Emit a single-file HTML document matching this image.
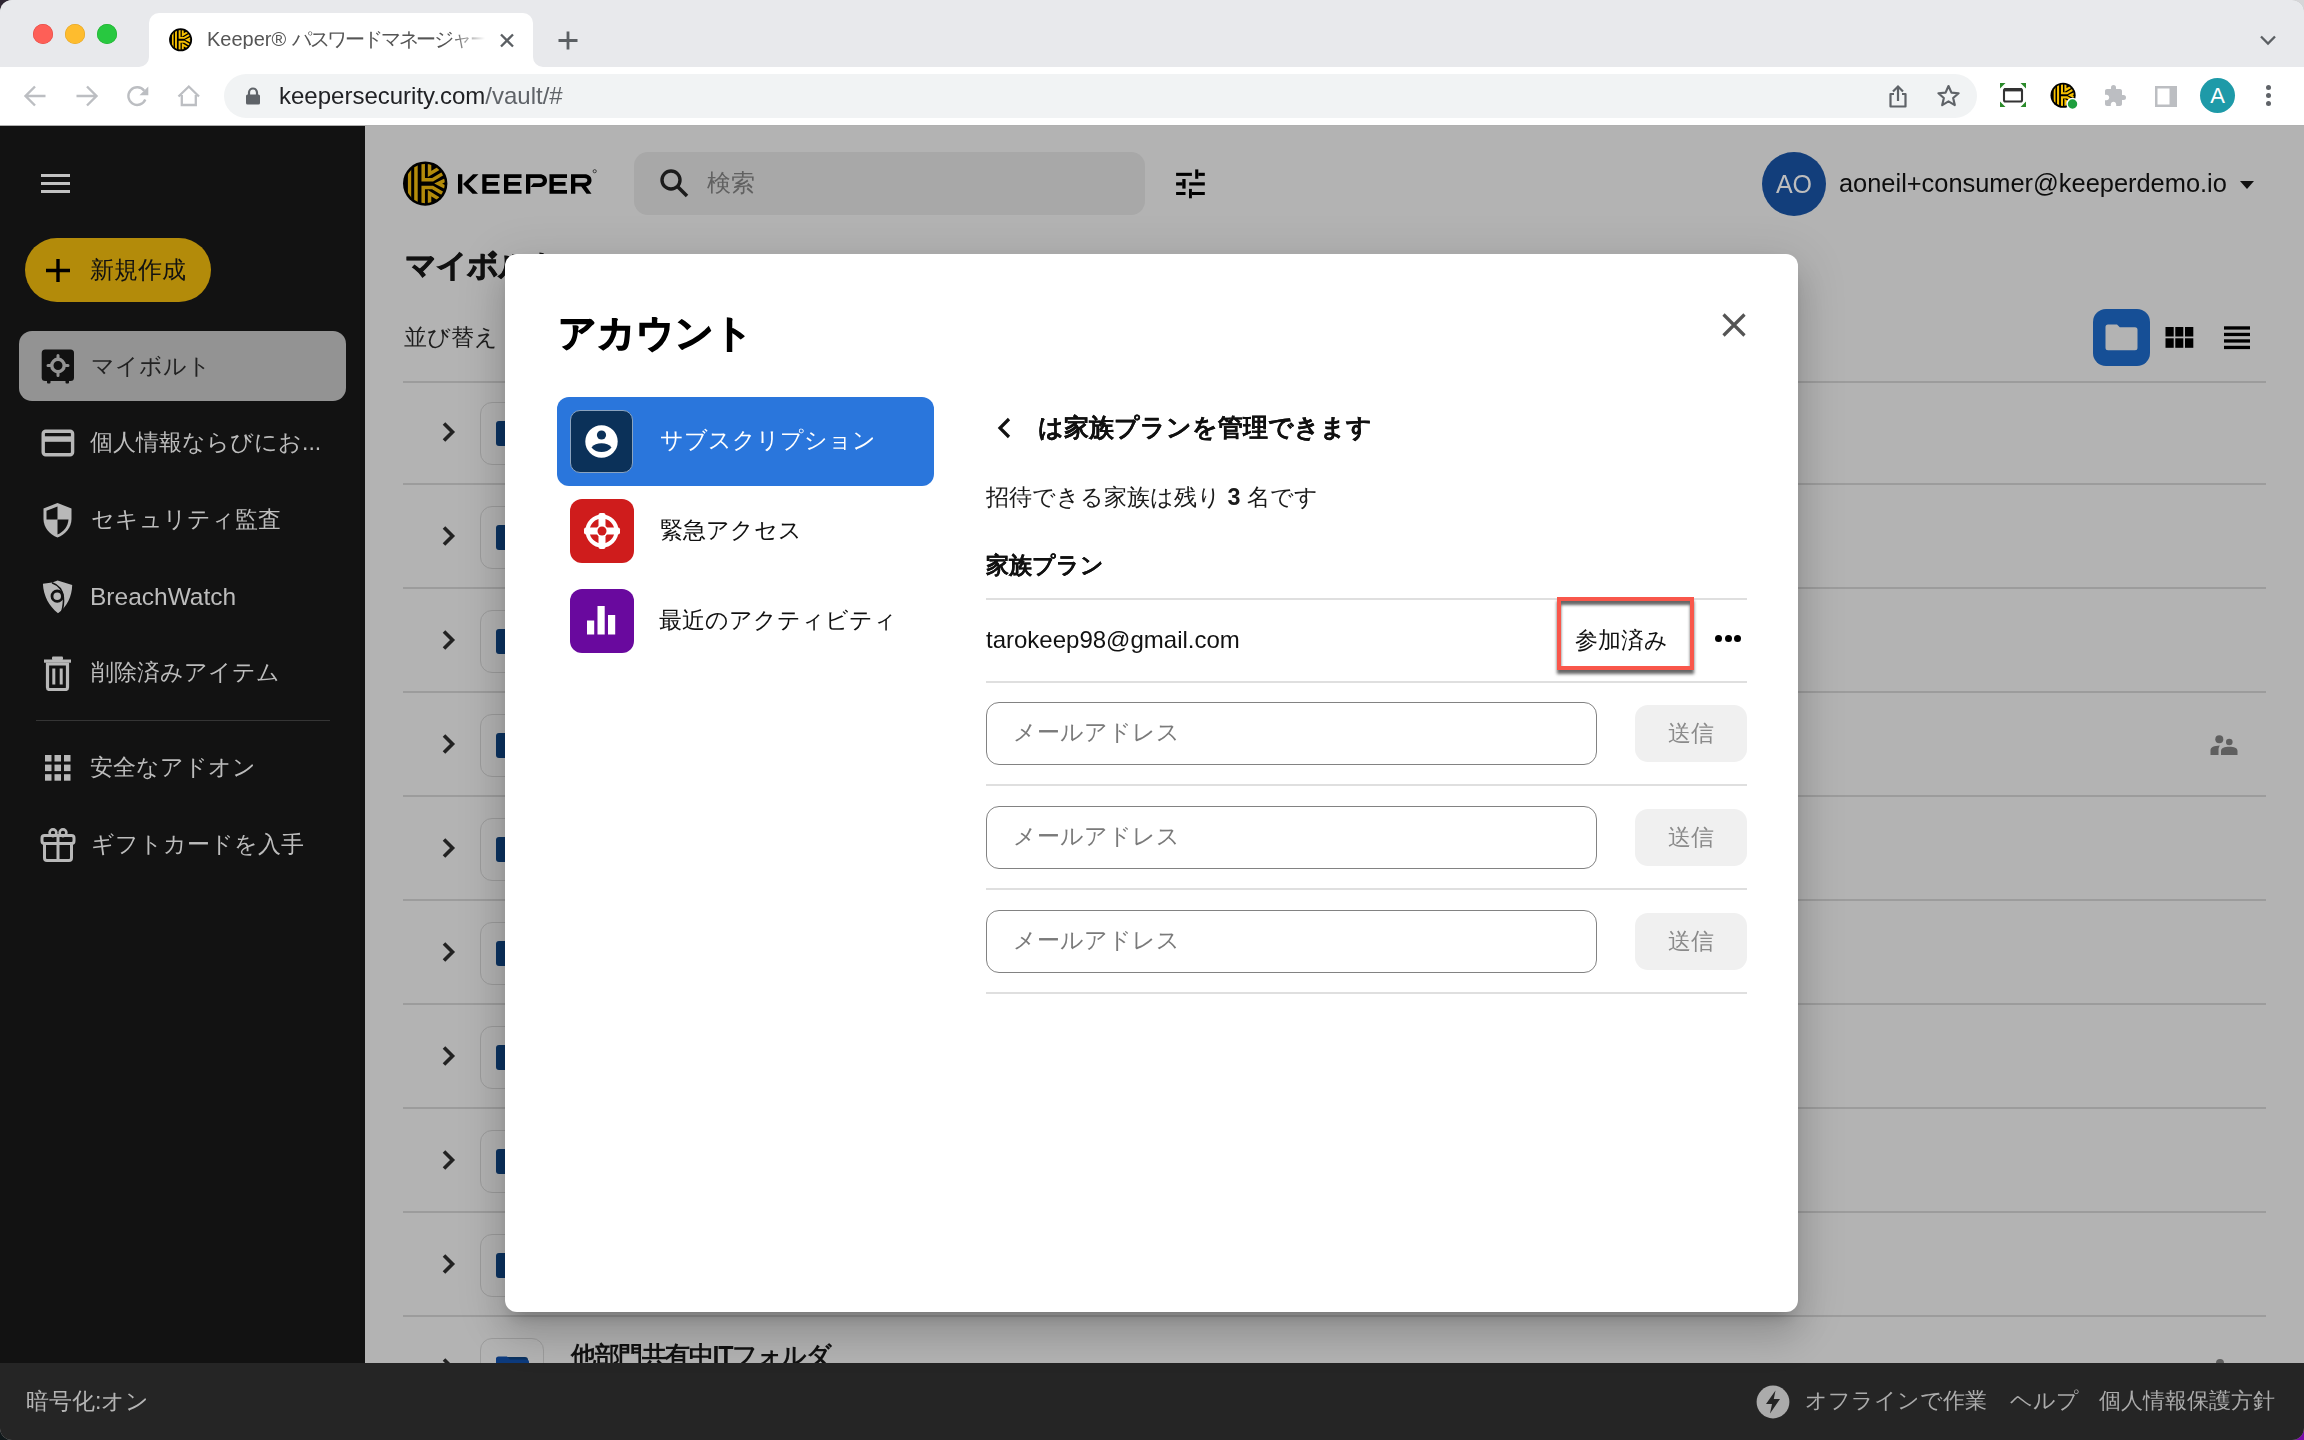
<!DOCTYPE html>
<html><head><meta charset="utf-8">
<style>
*{box-sizing:border-box;margin:0;padding:0}
html,body{width:2304px;height:1440px;overflow:hidden;background:#2a2530}
body{font-family:"Liberation Sans",sans-serif;position:relative}
.a{position:absolute}
#win{position:absolute;left:0;top:0;width:2304px;height:1440px;border-radius:12px;overflow:hidden;background:#b3b3b3;z-index:1}
#tabbar{left:0;top:0;width:2304px;height:67px;background:#e8e9ec}
#toolbar{left:0;top:67px;width:2304px;height:59px;background:#fff}
#sidebar{left:0;top:126px;width:365px;height:1237px;background:#121212}
#main{left:365px;top:126px;width:1939px;height:1237px;background:#b3b3b3}
#footer{left:0;top:1363px;width:2304px;height:77px;background:#252525}
#modal{left:505px;top:254px;width:1293px;height:1058px;background:#fff;border-radius:12px;box-shadow:0 11px 15px -7px rgba(0,0,0,.2),0 24px 38px 3px rgba(0,0,0,.12),0 9px 46px 8px rgba(0,0,0,.10)}
.t{white-space:nowrap;line-height:1;will-change:transform}
.bd{-webkit-text-stroke:0.9px currentColor}
.sb{font-size:23px;color:#bcbcbc;height:24px;line-height:24px}
</style></head>
<body>
<div class="a" style="left:0;top:0;width:20px;height:20px;background:#2f2633"></div>
<div class="a" style="left:2284px;top:0;width:20px;height:20px;background:#d6d6d8"></div>
<div class="a" style="left:0;top:1420px;width:20px;height:20px;background:#10181a"></div>
<div class="a" style="left:2284px;top:1420px;width:20px;height:20px;background:#7a0cab"></div>
<div id="win">

  <div id="tabbar" class="a"></div>
  <!-- traffic lights -->
  <div class="a" style="left:33px;top:24px;width:20px;height:20px;border-radius:50%;background:#fe5f57;box-shadow:inset 0 0 0 0.5px #e0443e"></div>
  <div class="a" style="left:65px;top:24px;width:20px;height:20px;border-radius:50%;background:#febc2e;box-shadow:inset 0 0 0 0.5px #dea123"></div>
  <div class="a" style="left:97px;top:24px;width:20px;height:20px;border-radius:50%;background:#28c840;box-shadow:inset 0 0 0 0.5px #1aab29"></div>
  <!-- tab -->
  <div class="a" style="left:149px;top:13px;width:384px;height:60px;background:#fff;border-radius:10px 10px 0 0"></div>
  <svg class="a" style="left:139px;top:57px" width="10" height="10"><path d="M0 10 A10 10 0 0 0 10 0 L10 10 Z" fill="#fff"/></svg>
  <svg class="a" style="left:533px;top:57px" width="10" height="10"><path d="M10 10 A10 10 0 0 1 0 0 L0 10 Z" fill="#fff"/></svg>
  <svg class="a" style="left:169px;top:28px" width="24" height="24" viewBox="0 0 48 48">
    <defs><clipPath id="fc"><circle cx="23.2" cy="23.6" r="19.6"/></clipPath></defs>
    <circle cx="23.2" cy="23.6" r="23" fill="#000"/>
    <g clip-path="url(#fc)" fill="none" stroke="#f7c000" stroke-width="3.8" stroke-linejoin="miter">
      <path d="M7.55 0V48" stroke-width="3.3"/><path d="M13.95 0V48"/>
      <path d="M21.2 0V19.75H30.6L46 10.5"/>
      <path d="M21.2 48V27.45H30.6L46 36.7"/>
      <path d="M27.55 0V14L37 8.3"/>
      <path d="M27.55 48V33.2L37 38.9"/>
      <path d="M46 18.8L36.2 23.6L46 28.4"/>
    </g>
  </svg>
  <div class="a t" style="left:207px;top:29px;font-size:20px;color:#555;width:278px;overflow:hidden;-webkit-mask-image:linear-gradient(90deg,#000 88%,transparent)">Keeper® <span style="letter-spacing:-2.2px">パスワードマネージャー</span></div>
  <svg class="a" style="left:499px;top:33px" width="16" height="15" viewBox="0 0 16 15"><path d="M2 1.5L14 13.5M14 1.5L2 13.5" stroke="#5b5f63" stroke-width="2.3"/></svg>
  <svg class="a" style="left:557px;top:30px" width="22" height="21" viewBox="0 0 22 21"><path d="M11 1.5V19.5M1.5 10.5H20.5" stroke="#5b5f63" stroke-width="2.8"/></svg>
  <svg class="a" style="left:2258px;top:32px" width="20" height="16" viewBox="0 0 20 16"><path d="M3 4.5L10 11.5L17 4.5" stroke="#5b5f63" stroke-width="2.3" fill="none"/></svg>
  <div id="toolbar" class="a"></div>
  <!-- nav icons -->
  <svg class="a" style="left:22px;top:83px" width="26" height="26" viewBox="0 0 26 26"><path d="M23.5 13H4.5M13 3.5L3.5 13L13 22.5" stroke="#bcbec2" stroke-width="2.4" fill="none"/></svg>
  <svg class="a" style="left:74px;top:83px" width="26" height="26" viewBox="0 0 26 26"><path d="M2.5 13H21.5M13 3.5L22.5 13L13 22.5" stroke="#bcbec2" stroke-width="2.4" fill="none"/></svg>
  <svg class="a" style="left:125px;top:84px" width="26" height="26" viewBox="0 0 26 26"><path d="M20.3 15.5A8.8 8.8 0 1 1 19.2 6.8" stroke="#bcbec2" stroke-width="2.4" fill="none"/><path d="M23.3 2.5V11.3H14.5Z" fill="#bcbec2"/></svg>
  <svg class="a" style="left:176px;top:84px" width="26" height="26" viewBox="0 0 26 26"><path d="M5.8 11V21H19.8V11M2.5 12.5L12.8 2.5L23 12.5" stroke="#bcbec2" stroke-width="2.3" fill="none" stroke-linejoin="miter"/></svg>
  <!-- url bar -->
  <div class="a" style="left:224px;top:74px;width:1753px;height:44px;border-radius:22px;background:#f1f3f4"></div>
  <svg class="a" style="left:244px;top:86px" width="18" height="20" viewBox="0 0 18 20"><path d="M5 9V6.5a4 4 0 0 1 8 0V9" stroke="#5f6368" stroke-width="2.2" fill="none"/><rect x="2" y="8.5" width="14" height="10" rx="1.5" fill="#5f6368"/></svg>
  <div class="a t" style="left:279px;top:84px;font-size:24px;color:#202124">keepersecurity.com<span style="color:#5f6368">/vault/#</span></div>
  <!-- right toolbar icons -->
  <svg class="a" style="left:1886px;top:84px" width="24" height="25" viewBox="0 0 24 25"><path d="M12 17V3M7 7.5L12 2.5L17 7.5" stroke="#5f6368" stroke-width="2.2" fill="none"/><path d="M8 10H4.5V22.5H19.5V10H16" stroke="#5f6368" stroke-width="2.2" fill="none" stroke-linejoin="round"/></svg>
  <svg class="a" style="left:1935px;top:83px" width="27" height="26" viewBox="0 0 24 24"><path d="M12 2.8l2.7 6.1 6.6.6-5 4.4 1.5 6.5L12 17l-5.8 3.4 1.5-6.5-5-4.4 6.6-.6z" stroke="#5f6368" stroke-width="2" fill="none" stroke-linejoin="round"/></svg>
  <svg class="a" style="left:1999px;top:82px" width="28" height="26" viewBox="0 0 28 26"><path d="M1 1H6.5L1 6.5Z M27 1H21.5L27 6.5Z M1 25H6.5L1 19.5Z M27 25H21.5L27 19.5Z" fill="#2a8a2a"/><rect x="5" y="7" width="18" height="12.5" rx="1.5" stroke="#333" stroke-width="2.1" fill="none"/><path d="M5 7.8H23" stroke="#333" stroke-width="3.2"/></svg>
  <svg class="a" style="left:2050px;top:82px" width="30" height="28" viewBox="0 0 30 28">
    <g transform="translate(0.5,0.5) scale(0.5417)">
    <defs><clipPath id="ec"><circle cx="23.2" cy="23.6" r="19.8"/></clipPath></defs>
    <circle cx="23.2" cy="23.6" r="23.2" fill="#000"/>
    <g clip-path="url(#ec)" fill="none" stroke="#f7c000" stroke-width="3.8" stroke-linejoin="miter">
      <path d="M7.55 0V48" stroke-width="3.3"/><path d="M13.95 0V48"/>
      <path d="M21.2 0V19.75H30.6L46 10.5"/>
      <path d="M21.2 48V27.45H30.6L46 36.7"/>
      <path d="M27.55 0V14L37 8.3"/>
      <path d="M27.55 48V33.2L37 38.9"/>
      <path d="M46 18.8L36.2 23.6L46 28.4"/>
    </g></g>
    <circle cx="22.5" cy="22" r="5.5" fill="#1e9e3e" stroke="#fff" stroke-width="1.5"/>
  </svg>
  <svg class="a" style="left:2102px;top:84px" width="26" height="24" viewBox="0 0 24 24"><path d="M20.5 11H19V7c0-1.1-.9-2-2-2h-4V3.5a2.5 2.5 0 0 0-5 0V5H4c-1.1 0-2 .9-2 2v3.8h1.5c1.5 0 2.7 1.2 2.7 2.7S5 16.2 3.5 16.2H2V20c0 1.1.9 2 2 2h3.8v-1.5c0-1.5 1.2-2.7 2.7-2.7s2.7 1.2 2.7 2.7V22H17c1.1 0 2-.9 2-2v-4h1.5a2.5 2.5 0 0 0 0-5z" fill="#bcbec2"/></svg>
  <svg class="a" style="left:2154px;top:85px" width="24" height="23" viewBox="0 0 24 23"><rect x="1" y="1" width="22" height="21" fill="#bcbec2"/><rect x="3.5" y="3.5" width="12" height="16" fill="#fff"/></svg>
  <div class="a" style="left:2200px;top:78px;width:35px;height:35px;border-radius:50%;background:#1e9aa8;color:#fff;font-size:22px;text-align:center;line-height:35px">A</div>
  <div class="a" style="left:2266px;top:85px;width:5px;height:5px;border-radius:50%;background:#5f6368"></div>
  <div class="a" style="left:2266px;top:93px;width:5px;height:5px;border-radius:50%;background:#5f6368"></div>
  <div class="a" style="left:2266px;top:101px;width:5px;height:5px;border-radius:50%;background:#5f6368"></div>
  <div class="a" style="left:0;top:125px;width:2304px;height:1px;background:#b0b0b0"></div>

  <div id="sidebar" class="a"></div>
  <!-- hamburger -->
  <div class="a" style="left:41px;top:174px;width:29px;height:3px;background:#c2c2c2"></div>
  <div class="a" style="left:41px;top:182px;width:29px;height:3px;background:#c2c2c2"></div>
  <div class="a" style="left:41px;top:190px;width:29px;height:3px;background:#c2c2c2"></div>
  <!-- new button -->
  <div class="a" style="left:25px;top:238px;width:186px;height:64px;border-radius:32px;background:#b38b0a"></div>
  <svg class="a" style="left:46px;top:259px" width="24" height="23" viewBox="0 0 24 23"><path d="M12 0V23M0 11.5H24" stroke="#000" stroke-width="3.4"/></svg>
  <div class="a t" style="left:90px;top:258px;font-size:24px;color:#111;height:24px;line-height:24px">新規作成</div>
  <!-- active item -->
  <div class="a" style="left:19px;top:331px;width:327px;height:70px;border-radius:13px;background:#939393"></div>
  <svg class="a" style="left:41px;top:349px" width="34" height="36" viewBox="0 0 34 36">
    <rect x="0.7" y="0.5" width="32.3" height="31.5" rx="3.5" fill="#111"/>
    <rect x="6" y="31" width="3.5" height="3.5" rx="1" fill="#111"/>
    <rect x="24.5" y="31" width="3.5" height="3.5" rx="1" fill="#111"/>
    <circle cx="17" cy="16.5" r="6.2" stroke="#939393" stroke-width="3.4" fill="none"/>
    <path d="M17 6.5v3M17 23.5v3M7 16.5h3M24 16.5h3" stroke="#939393" stroke-width="3" stroke-linecap="round"/>
  </svg>
  <div class="a t sb" style="left:91px;top:354px;color:#222">マイボルト</div>
  <!-- card -->
  <svg class="a" style="left:41px;top:429px" width="34" height="28" viewBox="0 0 34 28"><rect x="2.2" y="2.2" width="29.4" height="23.6" rx="2.5" stroke="#b8b8b8" stroke-width="3.4" fill="none"/><rect x="2" y="7.3" width="30" height="5.5" fill="#b8b8b8"/></svg>
  <div class="a t sb" style="left:90px;top:430px">個人情報ならびにお...</div>
  <!-- shield -->
  <svg class="a" style="left:42px;top:502px" width="31" height="36" viewBox="0 0 31 36">
    <path d="M15.5 1L29.5 6.5V17c0 8.5-6 15.5-14 18.5C7.5 32.5 1.5 25.5 1.5 17V6.5Z" fill="#b8b8b8"/>
    <path d="M15.5 4.5L4.5 8.8V17.5H15.5Z" fill="#121212"/>
    <path d="M15.5 17.5H26.5C26 24.5 21.5 30 15.5 32.5Z" fill="#121212"/>
  </svg>
  <div class="a t sb" style="left:91px;top:507px">セキュリティ監査</div>
  <!-- breachwatch -->
  <svg class="a" style="left:42px;top:580px" width="31" height="34" viewBox="0 0 31 34">
    <path d="M0.9 3.7L10.3 2.5L15.6 0.5L30.2 4.9C30 16 25 27 16 33.2C7 26 1.5 16 0.9 3.7Z" fill="#b8b8b8"/>
    <path d="M10 2.8C16 5 20.5 10 21.3 17C22 23 21 28 19.5 33" stroke="#121212" stroke-width="1.6" fill="none"/>
    <circle cx="15.2" cy="16.2" r="5.2" stroke="#121212" stroke-width="2.8" fill="none"/>
  </svg>
  <div class="a t sb" style="left:90px;top:585px;font-size:24.5px">BreachWatch</div>
  <!-- trash -->
  <svg class="a" style="left:44px;top:656px" width="27" height="35" viewBox="0 0 27 35">
    <rect x="0" y="3.5" width="27" height="3.2" fill="#b8b8b8"/>
    <rect x="8" y="0.5" width="11" height="3.5" rx="1" fill="#b8b8b8"/>
    <path d="M3.5 8.5V32c0 1.2.8 2 2 2h16c1.2 0 2-.8 2-2V8.5Z" stroke="#b8b8b8" stroke-width="3.2" fill="none" transform="translate(0,-0.5)"/>
    <rect x="8.3" y="12.5" width="3" height="16" fill="#b8b8b8"/>
    <rect x="15.7" y="12.5" width="3" height="16" fill="#b8b8b8"/>
  </svg>
  <div class="a t sb" style="left:91px;top:660px">削除済みアイテム</div>
  <div class="a" style="left:36px;top:720px;width:294px;height:1px;background:#353535"></div>
  <!-- grid -->
  <svg class="a" style="left:44px;top:754px" width="27" height="28" viewBox="0 0 27 28" fill="#b8b8b8">
    <rect x="1" y="1" width="6.5" height="6.5"/><rect x="10.5" y="1" width="6.5" height="6.5"/><rect x="20" y="1" width="6.5" height="6.5"/>
    <rect x="1" y="10.6" width="6.5" height="6.5"/><rect x="10.5" y="10.6" width="6.5" height="6.5"/><rect x="20" y="10.6" width="6.5" height="6.5"/>
    <rect x="1" y="20.2" width="6.5" height="6.5"/><rect x="10.5" y="20.2" width="6.5" height="6.5"/><rect x="20" y="20.2" width="6.5" height="6.5"/>
  </svg>
  <div class="a t sb" style="left:90px;top:755px">安全なアドオン</div>
  <!-- gift -->
  <svg class="a" style="left:40px;top:828px" width="36" height="34" viewBox="0 0 36 34">
    <rect x="2" y="7.5" width="32" height="8" rx="2.5" stroke="#b8b8b8" stroke-width="3" fill="none"/>
    <path d="M4.5 15.5V30c0 1.5 1 2.5 2.5 2.5h22c1.5 0 2.5-1 2.5-2.5V15.5" stroke="#b8b8b8" stroke-width="3" fill="none"/>
    <path d="M18 7.5V32.5" stroke="#b8b8b8" stroke-width="3"/>
    <circle cx="13" cy="4.8" r="3.4" stroke="#b8b8b8" stroke-width="2.6" fill="none"/>
    <circle cx="23" cy="4.8" r="3.4" stroke="#b8b8b8" stroke-width="2.6" fill="none"/>
  </svg>
  <div class="a t sb" style="left:91px;top:832px">ギフトカードを入手</div>

  <div id="main" class="a"></div>
  <!-- logo -->
  <svg class="a" style="left:402px;top:160px" width="48" height="48" viewBox="0 0 48 48">
    <defs><clipPath id="lc"><circle cx="23.2" cy="23.6" r="19.6"/></clipPath></defs>
    <circle cx="23.2" cy="23.6" r="22.2" fill="#000"/>
    <g clip-path="url(#lc)" fill="none" stroke="#b38b0a" stroke-width="3.5" stroke-linejoin="miter">
      <path d="M7.55 0V48" stroke-width="3.3"/><path d="M13.95 0V48"/>
      <path d="M21.2 0V19.75H30.6L46 10.5"/>
      <path d="M21.2 48V27.45H30.6L46 36.7"/>
      <path d="M27.55 0V14L37 8.3"/>
      <path d="M27.55 48V33.2L37 38.9"/>
      <path d="M46 18.8L36.2 23.6L46 28.4"/>
    </g>
  </svg>
  <svg class="a" style="left:456px;top:166px" width="142" height="30" viewBox="0 0 142 30" fill="#000">
    <path d="M2 8.2H6.3V27.7H2Z"/><path d="M17 8.2H22.5L12.5 17.9L22 27.7H16.5L7 17.9Z"/>
    <path d="M26.3 8.2H43.5V12H30.5V16H42V19.8H30.5V23.9H43.5V27.7H26.3Z"/>
    <path d="M48 8.2H65.5V12H52.3V16H64V19.8H52.3V23.9H65.5V27.7H48Z"/>
    <path d="M70 27.7V8.2H83.5C88 8.2 91 10.5 91 14.5C91 18.5 88 21 83.5 21H74.5L77.5 17.2H83.3C85.5 17.2 86.8 16.2 86.8 14.5C86.8 12.8 85.5 12 83.3 12H74.3V27.7Z"/>
    <path d="M93.5 8.2H111V12H97.8V16H109.5V19.8H97.8V23.9H111V27.7H93.5Z"/>
    <path d="M115 27.7V8.2H128.5C133 8.2 135.5 10.5 135.5 14.3C135.5 17.5 133.5 19.8 130 20.3L135.5 27.7H130.5L125.2 20.5H119.3V16.7H128.3C130.3 16.7 131.3 15.8 131.3 14.3C131.3 12.8 130.3 12 128.3 12H119.3V27.7Z"/>
    <circle cx="138.7" cy="5.2" r="1.6" fill="none" stroke="#000" stroke-width="0.6"/>
  </svg>
  <!-- search -->
  <div class="a" style="left:634px;top:152px;width:511px;height:63px;border-radius:14px;background:#a8a8a8"></div>
  <svg class="a" style="left:658px;top:167px" width="32" height="32" viewBox="0 0 32 32"><circle cx="13" cy="13" r="9" stroke="#1c1c1c" stroke-width="3.4" fill="none"/><path d="M19.5 19.5L29 29" stroke="#1c1c1c" stroke-width="3.6"/></svg>
  <div class="a t" style="left:707px;top:171px;font-size:24px;color:#616161;line-height:24px">検索</div>
  <!-- filter icon -->
  <svg class="a" style="left:1174px;top:168px" width="32" height="32" viewBox="0 0 32 32" fill="#000">
    <rect x="2.1" y="4.8" width="15.8" height="3.1"/><rect x="21.2" y="1.4" width="3.1" height="9.4"/><rect x="24.3" y="4.8" width="6.5" height="3.1"/>
    <rect x="2.1" y="14.3" width="6.4" height="3.2"/><rect x="8.3" y="11" width="3.3" height="9.6"/><rect x="15.2" y="14.3" width="15.6" height="3.2"/>
    <rect x="2.1" y="24" width="9.4" height="3"/><rect x="15" y="20.9" width="2.9" height="9.4"/><rect x="17.9" y="24" width="12.9" height="3"/>
  </svg>
  <!-- avatar + email -->
  <div class="a" style="left:1762px;top:152px;width:64px;height:64px;border-radius:50%;background:#123e7b"></div>
  <div class="a t" style="left:1762px;top:172px;width:64px;text-align:center;font-size:25px;color:#bdbdbd;line-height:25px">AO</div>
  <div class="a t" style="left:1839px;top:170px;font-size:25.4px;color:#0d0d0d;line-height:26px">aoneil+consumer@keeperdemo.io</div>
  <svg class="a" style="left:2239px;top:180px" width="16" height="10" viewBox="0 0 16 10"><path d="M1 1H15L8 9Z" fill="#111"/></svg>
  <!-- title + sort -->
  <div class="a t bd" style="left:405px;top:250px;font-size:31px;font-weight:bold;color:#111;line-height:32px;letter-spacing:-1px">マイボルト</div>
  <div class="a t" style="left:404px;top:325px;font-size:23px;color:#1e1e1e;line-height:24px">並び替え</div>
  <!-- view toggles -->
  <div class="a" style="left:2093px;top:309px;width:57px;height:57px;border-radius:13px;background:#164f96"></div>
  <svg class="a" style="left:2105px;top:324px" width="33" height="27" viewBox="0 0 33 27"><path d="M0.5 3A2.5 2.5 0 0 1 3 0.5H12L14.8 3.3H30A2.5 2.5 0 0 1 32.5 5.8V23.8A2.5 2.5 0 0 1 30 26.3H3A2.5 2.5 0 0 1 0.5 23.8Z" fill="#b3b3b3"/></svg>
  <svg class="a" style="left:2165px;top:326px" width="29" height="23" viewBox="0 0 29 23" fill="#000">
    <rect x="0.5" y="1" width="8.2" height="9.5"/><rect x="10.3" y="1" width="8" height="9.5"/><rect x="20" y="1" width="8.3" height="9.5"/>
    <rect x="0.5" y="12.3" width="8.2" height="9.5"/><rect x="10.3" y="12.3" width="8" height="9.5"/><rect x="20" y="12.3" width="8.3" height="9.5"/>
  </svg>
  <svg class="a" style="left:2223px;top:325px" width="28" height="25" viewBox="0 0 28 25" fill="#000">
    <rect x="1" y="1.3" width="26" height="3.3"/><rect x="1" y="7.8" width="26" height="3.3"/><rect x="1" y="14.3" width="26" height="3.3"/><rect x="1" y="20.8" width="26" height="3.3"/>
  </svg>
  <div class="a" style="left:403px;top:381px;width:1863px;height:2px;background:#9c9c9c"></div>
  <svg class="a" style="left:440px;top:421px" width="17" height="22" viewBox="0 0 17 22"><path d="M4 2.5L12.5 11L4 19.5" stroke="#222" stroke-width="3.6" fill="none"/></svg>
  <div class="a" style="left:480px;top:402px;width:64px;height:63px;border:1.5px solid #9c9c9c;border-radius:12px"></div>
  <div class="a" style="left:496px;top:421px;width:32px;height:25px;border-radius:3px;background:#0b3260"></div>
  <svg class="a" style="left:440px;top:525px" width="17" height="22" viewBox="0 0 17 22"><path d="M4 2.5L12.5 11L4 19.5" stroke="#222" stroke-width="3.6" fill="none"/></svg>
  <div class="a" style="left:480px;top:506px;width:64px;height:63px;border:1.5px solid #9c9c9c;border-radius:12px"></div>
  <div class="a" style="left:496px;top:525px;width:32px;height:25px;border-radius:3px;background:#0b3260"></div>
  <svg class="a" style="left:440px;top:629px" width="17" height="22" viewBox="0 0 17 22"><path d="M4 2.5L12.5 11L4 19.5" stroke="#222" stroke-width="3.6" fill="none"/></svg>
  <div class="a" style="left:480px;top:610px;width:64px;height:63px;border:1.5px solid #9c9c9c;border-radius:12px"></div>
  <div class="a" style="left:496px;top:629px;width:32px;height:25px;border-radius:3px;background:#0b3260"></div>
  <svg class="a" style="left:440px;top:733px" width="17" height="22" viewBox="0 0 17 22"><path d="M4 2.5L12.5 11L4 19.5" stroke="#222" stroke-width="3.6" fill="none"/></svg>
  <div class="a" style="left:480px;top:714px;width:64px;height:63px;border:1.5px solid #9c9c9c;border-radius:12px"></div>
  <div class="a" style="left:496px;top:733px;width:32px;height:25px;border-radius:3px;background:#0b3260"></div>
  <svg class="a" style="left:440px;top:837px" width="17" height="22" viewBox="0 0 17 22"><path d="M4 2.5L12.5 11L4 19.5" stroke="#222" stroke-width="3.6" fill="none"/></svg>
  <div class="a" style="left:480px;top:818px;width:64px;height:63px;border:1.5px solid #9c9c9c;border-radius:12px"></div>
  <div class="a" style="left:496px;top:837px;width:32px;height:25px;border-radius:3px;background:#0b3260"></div>
  <svg class="a" style="left:440px;top:941px" width="17" height="22" viewBox="0 0 17 22"><path d="M4 2.5L12.5 11L4 19.5" stroke="#222" stroke-width="3.6" fill="none"/></svg>
  <div class="a" style="left:480px;top:922px;width:64px;height:63px;border:1.5px solid #9c9c9c;border-radius:12px"></div>
  <div class="a" style="left:496px;top:941px;width:32px;height:25px;border-radius:3px;background:#0b3260"></div>
  <svg class="a" style="left:440px;top:1045px" width="17" height="22" viewBox="0 0 17 22"><path d="M4 2.5L12.5 11L4 19.5" stroke="#222" stroke-width="3.6" fill="none"/></svg>
  <div class="a" style="left:480px;top:1026px;width:64px;height:63px;border:1.5px solid #9c9c9c;border-radius:12px"></div>
  <div class="a" style="left:496px;top:1045px;width:32px;height:25px;border-radius:3px;background:#0b3260"></div>
  <svg class="a" style="left:440px;top:1149px" width="17" height="22" viewBox="0 0 17 22"><path d="M4 2.5L12.5 11L4 19.5" stroke="#222" stroke-width="3.6" fill="none"/></svg>
  <div class="a" style="left:480px;top:1130px;width:64px;height:63px;border:1.5px solid #9c9c9c;border-radius:12px"></div>
  <div class="a" style="left:496px;top:1149px;width:32px;height:25px;border-radius:3px;background:#0b3260"></div>
  <svg class="a" style="left:440px;top:1253px" width="17" height="22" viewBox="0 0 17 22"><path d="M4 2.5L12.5 11L4 19.5" stroke="#222" stroke-width="3.6" fill="none"/></svg>
  <div class="a" style="left:480px;top:1234px;width:64px;height:63px;border:1.5px solid #9c9c9c;border-radius:12px"></div>
  <div class="a" style="left:496px;top:1253px;width:32px;height:25px;border-radius:3px;background:#0b3260"></div>
  <svg class="a" style="left:440px;top:1357px" width="17" height="22" viewBox="0 0 17 22"><path d="M4 2.5L12.5 11L4 19.5" stroke="#222" stroke-width="3.6" fill="none"/></svg>
  <div class="a" style="left:480px;top:1338px;width:64px;height:63px;border:1.5px solid #9c9c9c;border-radius:12px"></div>
  <div class="a" style="left:496px;top:1357px;width:32px;height:25px;border-radius:3px;background:#0b3260"></div>
  <div class="a" style="left:403px;top:483px;width:1863px;height:2px;background:#9c9c9c"></div>
  <div class="a" style="left:403px;top:587px;width:1863px;height:2px;background:#9c9c9c"></div>
  <div class="a" style="left:403px;top:691px;width:1863px;height:2px;background:#9c9c9c"></div>
  <div class="a" style="left:403px;top:795px;width:1863px;height:2px;background:#9c9c9c"></div>
  <div class="a" style="left:403px;top:899px;width:1863px;height:2px;background:#9c9c9c"></div>
  <div class="a" style="left:403px;top:1003px;width:1863px;height:2px;background:#9c9c9c"></div>
  <div class="a" style="left:403px;top:1107px;width:1863px;height:2px;background:#9c9c9c"></div>
  <div class="a" style="left:403px;top:1211px;width:1863px;height:2px;background:#9c9c9c"></div>
  <div class="a" style="left:403px;top:1315px;width:1863px;height:2px;background:#9c9c9c"></div>

  <!-- shared icon row 4 -->
  <svg class="a" style="left:2209px;top:734px" width="30" height="22" viewBox="0 0 30 22" fill="#5f5f5f">
    <circle cx="10.3" cy="5.3" r="4"/><circle cx="20.3" cy="8" r="3.3"/>
    <path d="M1.5 21V16.5C1.5 13 5 11.8 11 11.5C10 12.5 9.5 14 9.5 16V21Z"/>
    <path d="M12 21V17C12 14 15.5 12.7 20.3 12.7C25 12.7 28.5 14 28.5 17V21Z"/>
  </svg>
  <!-- last row -->
  <div class="a t bd" style="left:571px;top:1342px;font-size:25px;font-weight:bold;color:#111;line-height:26px;letter-spacing:-1.4px;-webkit-text-stroke-width:0px">他部門共有中ITフォルダ</div>
  <svg class="a" style="left:496px;top:1356px" width="34" height="10" viewBox="0 0 34 10"><path d="M0 3A2.5 2.5 0 0 1 2.5 0.5H11L14 3.5H30.5A2.5 2.5 0 0 1 33 6V10H0Z" fill="#0d3b7e"/></svg>
  <svg class="a" style="left:2211px;top:1355px" width="20" height="10" viewBox="0 0 20 10"><circle cx="9" cy="8" r="4" fill="#5f5f5f"/></svg>
  <div id="footer" class="a"></div>
  <div class="a t" style="left:26px;top:1389px;font-size:23px;color:#b5b5b5;line-height:24px">暗号化:オン</div>
  <svg class="a" style="left:1756px;top:1385px" width="34" height="34" viewBox="0 0 34 34"><circle cx="17" cy="17" r="16.4" fill="#ababab"/><path d="M19.5 5.5L10 19H16L14 28.5L24 14H17.8Z" fill="#252525"/></svg>
  <div class="a t" style="left:1805px;top:1389px;font-size:22px;color:#ababab;line-height:24px">オフラインで作業</div>
  <div class="a t" style="left:2010px;top:1389px;font-size:21.5px;color:#ababab;line-height:24px">ヘルプ</div>
  <div class="a t" style="left:2099px;top:1389px;font-size:22.2px;color:#ababab;line-height:24px">個人情報保護方針</div>
  <div id="modal" class="a"></div>
  <div class="a t bd" style="left:558px;top:313px;font-size:38px;font-weight:bold;-webkit-text-stroke-width:1.2px;color:#000;line-height:40px">アカウント</div>
  <svg class="a" style="left:1720px;top:311px" width="28" height="28" viewBox="0 0 28 28"><path d="M3.5 3.5L24.5 24.5M24.5 3.5L3.5 24.5" stroke="#555" stroke-width="3.2"/></svg>
  <!-- left nav -->
  <div class="a" style="left:557px;top:397px;width:377px;height:89px;border-radius:12px;background:#2a76dc"></div>
  <div class="a" style="left:570px;top:410px;width:63px;height:63px;border-radius:10px;background:#0b3159;border:1px solid #8aa3bf"></div>
  <svg class="a" style="left:585px;top:425px" width="34" height="34" viewBox="0 0 34 34">
    <circle cx="16.5" cy="16.5" r="16.2" fill="#fff"/>
    <circle cx="16.5" cy="10" r="4.6" fill="#0b3159"/>
    <path d="M6.5 22.5C8.5 19.5 12.5 18.2 16.5 18.2S24.5 19.5 26.5 22.5C24 25.5 20.5 27 16.5 27S9 25.5 6.5 22.5Z" fill="#0b3159"/>
  </svg>
  <div class="a t" style="left:660px;top:428px;font-size:23px;color:#fff;line-height:24px">サブスクリプション</div>
  <div class="a" style="left:570px;top:499px;width:64px;height:64px;border-radius:12px;background:#cf1c1c"></div>
  <svg class="a" style="left:580px;top:509px" width="44" height="44" viewBox="0 0 44 44">
    <circle cx="22" cy="22" r="14.5" stroke="#fff" stroke-width="4" fill="none"/>
    <circle cx="22" cy="22" r="6" fill="#fff"/>
    <rect x="18.5" y="4" width="7" height="36" rx="2" fill="#fff"/>
    <rect x="4" y="18.5" width="36" height="7" rx="2" fill="#fff"/>
    <circle cx="22" cy="22" r="4.5" fill="#cf1c1c"/>
    <path d="M22 13V17M22 27V31M13 22H17M27 22H31" stroke="#cf1c1c" stroke-width="0"/>
  </svg>
  <div class="a t" style="left:660px;top:518px;font-size:23px;color:#111;line-height:24px">緊急アクセス</div>
  <div class="a" style="left:570px;top:589px;width:64px;height:64px;border-radius:12px;background:#69099e"></div>
  <svg class="a" style="left:585px;top:604px" width="34" height="34" viewBox="0 0 34 34" fill="#fff">
    <rect x="2" y="16.5" width="7.2" height="14"/><rect x="12.5" y="2" width="7.2" height="28.5"/><rect x="23" y="11" width="7.2" height="19.5"/>
  </svg>
  <div class="a t" style="left:659px;top:608px;font-size:23px;color:#111;line-height:24px">最近のアクティビティ</div>
  <!-- right pane -->
  <svg class="a" style="left:994px;top:416px" width="20" height="24" viewBox="0 0 20 24"><path d="M15 3L6 12L15 21" stroke="#111" stroke-width="3.2" fill="none"/></svg>
  <div class="a t bd" style="left:1038px;top:415px;-webkit-text-stroke-width:0.1px;font-size:24.5px;font-weight:bold;color:#111;line-height:26px">は家族プランを管理できます</div>
  <div class="a t" style="left:986px;top:485px;font-size:23.3px;color:#1a1a1a;line-height:24px">招待できる家族は残り <b>3</b> 名です</div>
  <div class="a t bd" style="left:986px;top:553px;font-size:23px;font-weight:bold;-webkit-text-stroke-width:0.1px;color:#111;line-height:24px">家族プラン</div>
  <div class="a" style="left:986px;top:598px;width:761px;height:2px;background:#dfdfdf"></div>
  <div class="a t" style="left:986px;top:627px;font-size:24px;color:#111;line-height:26px">tarokeep98@gmail.com</div>
  <div class="a" style="left:1557px;top:597px;width:137px;height:73px;border:4.8px solid #f9574b;box-shadow:0 4px 3px rgba(0,0,0,0.6), inset 0 4px 3px rgba(0,0,0,0.6)"></div>
  <div class="a t" style="left:1575px;top:628px;font-size:23px;color:#111;line-height:24px">参加済み</div>
  <div class="a" style="left:1715px;top:635px;width:7px;height:7px;border-radius:50%;background:#000"></div>
  <div class="a" style="left:1725px;top:635px;width:7px;height:7px;border-radius:50%;background:#000"></div>
  <div class="a" style="left:1734px;top:635px;width:7px;height:7px;border-radius:50%;background:#000"></div>
  <div class="a" style="left:986px;top:681px;width:761px;height:2px;background:#dfdfdf"></div>
  <div class="a" style="left:986px;top:702px;width:611px;height:63px;border:1.8px solid #828282;border-radius:13px"></div>
  <div class="a t" style="left:1013px;top:720px;font-size:23px;color:#7a7a7a;line-height:24px">メールアドレス</div>
  <div class="a" style="left:1635px;top:705px;width:112px;height:57px;border-radius:13px;background:#f0f0f0"></div>
  <div class="a t" style="left:1635px;top:721px;width:112px;text-align:center;font-size:23px;color:#8a8a8a;line-height:24px">送信</div>
  <div class="a" style="left:986px;top:784px;width:761px;height:2px;background:#dfdfdf"></div>
  <div class="a" style="left:986px;top:806px;width:611px;height:63px;border:1.8px solid #828282;border-radius:13px"></div>
  <div class="a t" style="left:1013px;top:824px;font-size:23px;color:#7a7a7a;line-height:24px">メールアドレス</div>
  <div class="a" style="left:1635px;top:809px;width:112px;height:57px;border-radius:13px;background:#f0f0f0"></div>
  <div class="a t" style="left:1635px;top:825px;width:112px;text-align:center;font-size:23px;color:#8a8a8a;line-height:24px">送信</div>
  <div class="a" style="left:986px;top:888px;width:761px;height:2px;background:#dfdfdf"></div>
  <div class="a" style="left:986px;top:910px;width:611px;height:63px;border:1.8px solid #828282;border-radius:13px"></div>
  <div class="a t" style="left:1013px;top:928px;font-size:23px;color:#7a7a7a;line-height:24px">メールアドレス</div>
  <div class="a" style="left:1635px;top:913px;width:112px;height:57px;border-radius:13px;background:#f0f0f0"></div>
  <div class="a t" style="left:1635px;top:929px;width:112px;text-align:center;font-size:23px;color:#8a8a8a;line-height:24px">送信</div>
  <div class="a" style="left:986px;top:992px;width:761px;height:2px;background:#dfdfdf"></div>
</div>
</body></html>
